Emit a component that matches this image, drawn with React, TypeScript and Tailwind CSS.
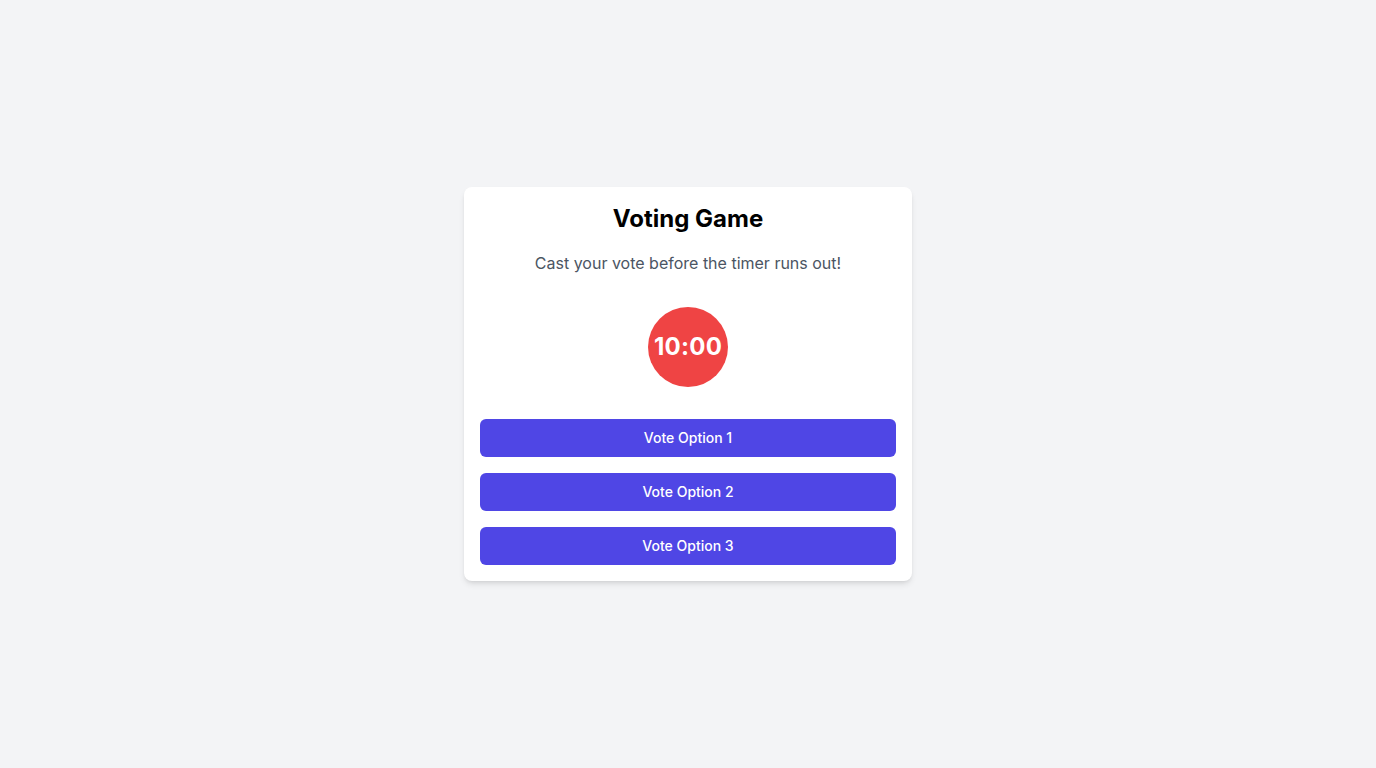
export default function App() {
  const options = ['Vote Option 1', 'Vote Option 2', 'Vote Option 3'];

  return (
    <div className="min-h-screen bg-[#f3f4f6] flex items-center justify-center font-['Inter',sans-serif]">
      <div className="w-full max-w-md bg-white rounded-lg shadow-md p-4 flex flex-col items-center">
        <h1 className="text-2xl font-bold text-black mb-4">Voting Game</h1>
        <p className="text-base text-[#4b5563] mb-8">Cast your vote before the timer runs out!</p>

        {/* Timer */}
        <div className="w-20 h-20 rounded-full bg-[#ef4444] flex items-center justify-center mb-8">
          <span className="text-2xl font-bold text-white tracking-[0.01em]">10:00</span>
        </div>

        {/* Options */}
        <div className="w-full flex flex-col gap-4">
          {options.map((opt) => (
            <button
              key={opt}
              className="w-full h-[38px] rounded-md bg-[#4f46e5] text-white text-sm font-medium"
            >
              {opt}
            </button>
          ))}
        </div>
      </div>
    </div>
  );
}
